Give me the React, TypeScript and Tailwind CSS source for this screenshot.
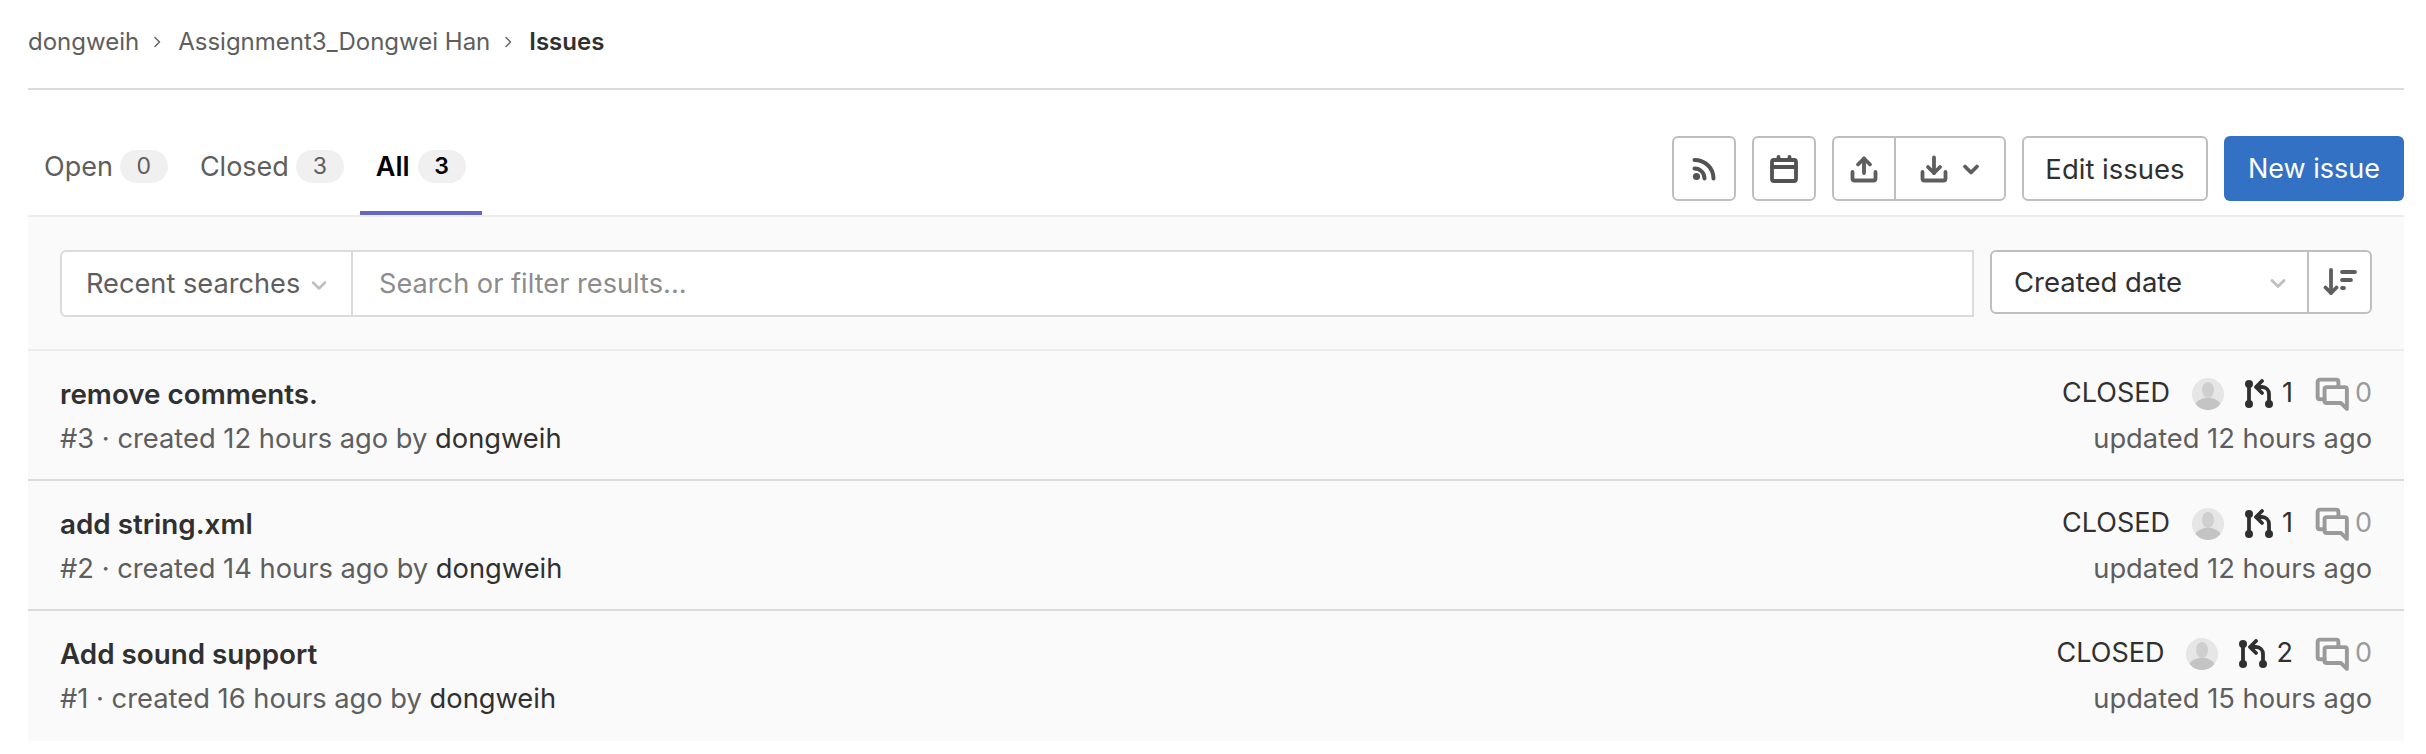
import React from "react";

const Rss = () => (
  <svg width="26" height="26" viewBox="0 0 26 26" fill="none" stroke="#525252" strokeWidth="4" strokeLinecap="round">
    <circle cx="5.5" cy="20.500" r="3.600" fill="#525252" stroke="none" />
    <path d="M3.500 12.500c5.600 0 10 4.400 10 10" />
    <path d="M3.500 4c10.500 0 19 8 19 18.500" />
  </svg>
);
const Calendar = () => (
  <svg width="28" height="28" viewBox="0 0 28 28" fill="none" stroke="#525252" strokeWidth="3.800" strokeLinecap="round" strokeLinejoin="round">
    <rect x="2" y="5" width="24" height="21" rx="2" />
    <path d="M2 12h24" />
    <path d="M8.500 2v3M19.500 2v3" />
  </svg>
);
const Upload = () => (
  <svg width="28" height="28" viewBox="0 0 28 28" fill="none" stroke="#5e5e5e" strokeWidth="3.800" strokeLinecap="round" strokeLinejoin="round">
    <path d="M2.500 17v6.500a2 2 0 0 0 2 2h19a2 2 0 0 0 2-2V17" />
    <path d="M14 18V3.500" />
    <path d="M8 9.500L14 3.500l6 6" />
  </svg>
);
const Download = () => (
  <svg width="28" height="28" viewBox="0 0 28 28" fill="none" stroke="#5e5e5e" strokeWidth="3.800" strokeLinecap="round" strokeLinejoin="round">
    <path d="M2.500 17v6.500a2 2 0 0 0 2 2h19a2 2 0 0 0 2-2V17" />
    <path d="M14 2.500V18" />
    <path d="M8 12l6 6 6-6" />
  </svg>
);
const Chevron = ({ color = "#5e5e5e", size = 18, w = 3.800 }: { color?: string; size?: number; w?: number }) => (
  <svg width={size} height={size} viewBox="0 0 18 18" fill="none" stroke={color} strokeWidth={w} strokeLinecap="round" strokeLinejoin="round">
    <path d="M3 6.500L9 12.500l6-6" />
  </svg>
);
const Sort = () => (
  <svg width="34" height="30" viewBox="0 0 34 30" fill="none" stroke="#5e5e5e" strokeWidth="3.800" strokeLinecap="round" strokeLinejoin="round">
    <path d="M8 3v23" />
    <path d="M2.500 20.500L8 26l5.500-5.500" />
    <path d="M19 5h13" />
    <path d="M19 13h9" />
    <path d="M19 21h2" />
  </svg>
);
const MergeRequest = () => (
  <svg width="30" height="30" viewBox="0 0 30 30" fill="none" stroke="#303030" strokeWidth="3.800" strokeLinecap="round" strokeLinejoin="round">
    <circle cx="5" cy="5" r="4" fill="#303030" stroke="none" />
    <circle cx="5" cy="25" r="4" fill="#303030" stroke="none" />
    <circle cx="25" cy="25" r="4" fill="#303030" stroke="none" />
    <path d="M5 5v20" />
    <path d="M25 25V15c0-4-3-7-7-7h-5" />
    <path d="M18 2l-6 6 6 6" />
  </svg>
);
const Comments = () => (
  <svg width="34" height="34" viewBox="0 0 32 32" fill="none" stroke="#9a9a9a" strokeWidth="3.700" strokeLinecap="round" strokeLinejoin="round">
    <path d="M22 9V4.500A2 2 0 0 0 20 2.500H4.500a2 2 0 0 0-2 2V19a2 2 0 0 0 2 2H9" />
    <path d="M11 9.500h17a2 2 0 0 1 2 2V30l-5.500-5.500H11a2 2 0 0 1-2-2v-11a2 2 0 0 1 2-2z" />
  </svg>
);
const Avatar = () => (
  <svg width="32" height="32" viewBox="0 0 32 32">
    <circle cx="16" cy="16" r="16" fill="#e6e6e6" />
    <ellipse cx="16" cy="12" rx="6" ry="8" fill="#cfcfcf" />
    <path d="M3.500 26c1.500-3.500 5-4.500 9-6h7c4 1.500 7.500 2.500 9 6a16 16 0 0 1-25 0z" fill="#c4c4c4" />
  </svg>
);
const Crumb = () => (
  <svg width="14" height="14" viewBox="0 0 14 14" fill="none" stroke="#666" strokeWidth="1.500" strokeLinecap="round" strokeLinejoin="round">
    <path d="M5 2.500L9.500 7 5 11.500" />
  </svg>
);

const Tab = ({ label, n, active }: { label: string; n: number; active?: boolean }) => (
  <div className={`h-full flex items-center border-b-[4px] pb-[9px] px-[16px] ${active ? "gap-[8px] border-[#6666c4] text-black font-semibold" : "gap-[7px] border-transparent text-[#5e5e5e]"}`}>
    <span className="text-[27px] leading-none">{label}</span>
    <span className="h-[33px] min-w-[48px] px-[12px] rounded-full bg-[#f0f0f0] text-[23px] flex items-center justify-center">{n}</span>
  </div>
);

const issues = [
  { title: "remove comments.", id: 3, created: "12", updated: "12", mr: 1 },
  { title: "add string.xml", id: 2, created: "14", updated: "12", mr: 1 },
  { title: "Add sound support", id: 1, created: "16", updated: "15", mr: 2 },
];

const btn = "h-[65px] bg-white border-2 border-[#bfbfbf] rounded-[6px] flex items-center justify-center";

export default function App() {
  return (
    <div className="bg-white h-[754px] pl-[28px] pr-[22px] overflow-hidden" style={{ fontFamily: "Inter, 'Liberation Sans', sans-serif" }}>
      <div className="h-[90px] border-b-2 border-[#dbdbdb] flex items-center gap-[11px] text-[24px] text-[#5e5e5e] pb-[4px]">
        <span>dongweih</span>
        <Crumb />
        <span className="ml-[3px]">Assignment3_Dongwei Han</span>
        <Crumb />
        <span className="ml-[3px] font-semibold text-[#303030]">Issues</span>
      </div>

      <div className="h-[127px] flex items-end justify-between border-b-2 border-[#ededed]">
        <div className="h-[84px] flex items-center">
          <Tab label="Open" n={0} />
          <Tab label="Closed" n={3} />
          <Tab label="All" n={3} active />
        </div>
        <div className="flex items-center gap-[16px] pb-[14px]">
          <div className={`${btn} w-[64px]`}><Rss /></div>
          <div className={`${btn} w-[64px]`}><Calendar /></div>
          <div className={`${btn} w-[174px]`}>
            <div className="w-[62px] h-full flex items-center justify-center border-r-2 border-[#bfbfbf]"><Upload /></div>
            <div className="flex-1 h-full flex items-center justify-center gap-[14px]"><Download /><Chevron /></div>
          </div>
          <div className={`${btn} w-[186px] pt-[2px] text-[27.500px] text-[#303030]`}>Edit issues</div>
          <div className="h-[65px] w-[180px] pt-[2px] bg-[#3371c4] rounded-[6px] flex items-center justify-center text-[27px] text-white">New issue</div>
        </div>
      </div>

      <div className="h-[134px] bg-[#fafafa] px-[32px] flex items-start pt-[33px] gap-[16px] border-b-2 border-[#ededed]">
        <div className="flex-1 h-[67px] flex bg-white border-2 border-[#dbdbdb] rounded-l-[6px]">
          <div className="w-[291px] flex items-center gap-[10px] pl-[24px] pt-[2px] border-r-2 border-[#dbdbdb] text-[27.200px] text-[#5e5e5e]">
            Recent searches <Chevron color="#bfbfbf" size={18} w={2.500} />
          </div>
          <div className="flex items-center pl-[26px] pt-[2px] text-[27.200px] text-[#8c8c8c]">Search or filter results...</div>
        </div>
        <div className="w-[382px] h-[64px] flex bg-white border-2 border-[#bfbfbf] rounded-[6px]">
          <div className="flex-1 flex items-center justify-between pl-[22px] pr-[20px] pt-[2px] border-r-2 border-[#bfbfbf] text-[27.500px] text-[#303030]">
            Created date <Chevron color="#bfbfbf" size={18} w={2.800} />
          </div>
          <div className="w-[61px] flex items-center justify-center"><Sort /></div>
        </div>
      </div>

      {issues.map((it, i) => (
        <div key={it.id} className={`h-[130px] bg-[#fafafa] px-[32px] flex justify-between items-center ${i < 2 ? "pt-[2px] border-b-2 border-[#dbdbdb]" : ""}`}>
          <div className="flex flex-col gap-[13px]">
            <div className="text-[27.800px] leading-[32px] font-semibold text-[#303030]">{it.title}</div>
            <div className="text-[27.300px] leading-[32px] text-[#5e5e5e]">
              #{it.id} · created {it.created} hours ago by <span className="text-[#303030]">dongweih</span>
            </div>
          </div>
          <div className="flex flex-col items-end gap-[13px]">
            <div className="h-[32px] flex items-center text-[27px]">
              <span className="text-[#303030] mr-[22px]">CLOSED</span>
              <Avatar />
              <span className="ml-[20px]"><MergeRequest /></span>
              <span className="ml-[8px] text-[#303030]">{it.mr}</span>
              <span className="ml-[22px]"><Comments /></span>
              <span className="ml-[6px] text-[#9a9a9a]">0</span>
            </div>
            <div className="text-[27.300px] leading-[32px] text-[#5e5e5e]">updated {it.updated} hours ago</div>
          </div>
        </div>
      ))}
    </div>
  );
}
